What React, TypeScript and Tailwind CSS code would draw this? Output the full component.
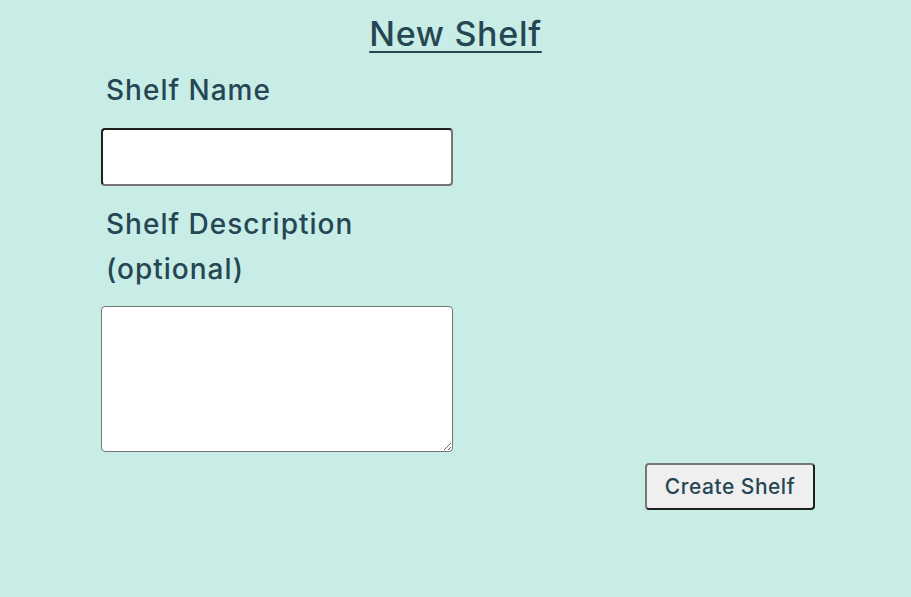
export default function App() {
  return (
    <div className="min-h-screen w-full bg-[#c7ede6] text-[#264653] font-['Inter',sans-serif]">
      <h1 className="pt-[13px] text-center text-[34px] leading-[42px] font-medium tracking-[0.7px] underline underline-offset-[5px] decoration-2">
        New Shelf
      </h1>
      <div className="ml-[101px] w-[352px]">
        <label className="block mt-[19px] pl-[5px] text-[28px] leading-[32px] font-medium tracking-[1px]">Shelf Name</label>
        <input
          type="text"
          className="mt-[22px] block h-[58px] w-[352px] rounded-[4px] border-2 border-t-[#1f1f1f] border-l-[#1f1f1f] border-r-[#767676] border-b-[#767676] bg-white"
        />
        <label className="block mt-[16px] pl-[5px] text-[28px] leading-[45px] font-medium tracking-[1px]">
          Shelf Description (optional)
        </label>
        <textarea className="mt-[14px] block h-[146px] w-[352px] rounded-[4px] border border-[#767676] bg-white" />
      </div>
      <div className="flex justify-end pr-[96px] mt-[11px]">
        <button className="h-[47px] w-[170px] rounded-[4px] border-2 border-t-[#767676] border-l-[#767676] border-r-[#1f1f1f] border-b-[#1f1f1f] bg-[#efefef] text-[21px] tracking-[0.5px] text-[#264653] font-medium">
          Create Shelf
        </button>
      </div>
    </div>
  )
}
